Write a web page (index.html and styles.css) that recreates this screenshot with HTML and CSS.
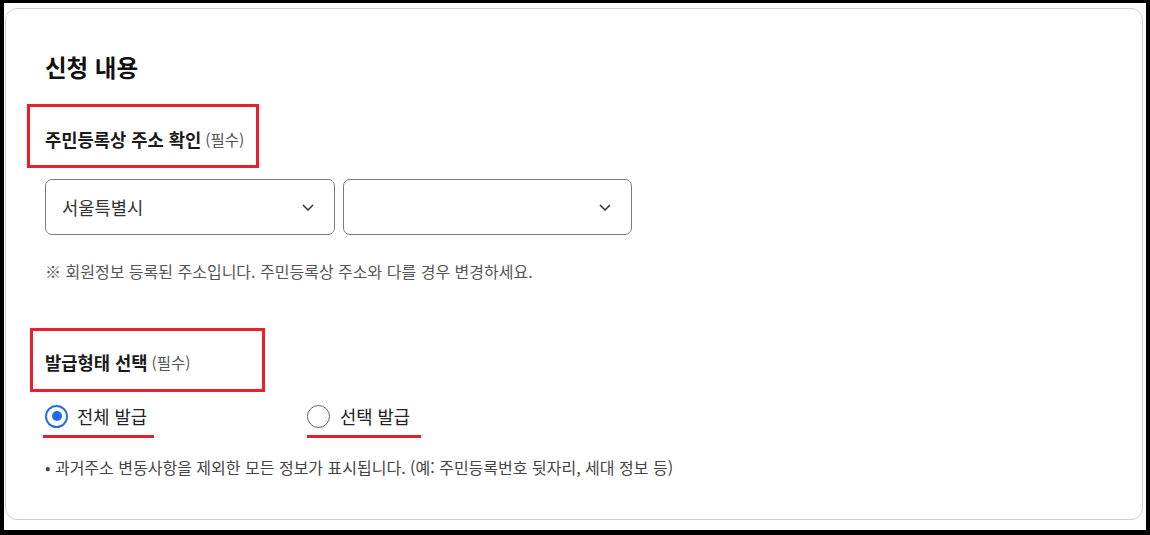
FILE: index.html
```html
<!DOCTYPE html>
<html lang="ko">
<head>
<meta charset="utf-8">
<link rel="stylesheet" href="styles.css">
</head>
<body>
<div class="frame">
  <section class="card">
    <h2 class="title">신청 내용</h2>

    <div class="label-box box-addr">
      <span class="label">주민등록상 주소 확인</span> <span class="req">(필수)</span>
    </div>

    <div class="selects">
      <div class="select">
        <span class="select-text">서울특별시</span>
        <svg class="chev" width="12" height="7" viewBox="0 0 12 7"><path d="M1 1 L6 6 L11 1" fill="none" stroke="#333" stroke-width="1.5"/></svg>
      </div>
      <div class="select second">
        <span class="select-text"></span>
        <svg class="chev" width="12" height="7" viewBox="0 0 12 7"><path d="M1 1 L6 6 L11 1" fill="none" stroke="#333" stroke-width="1.5"/></svg>
      </div>
    </div>

    <p class="note note-addr">※ 회원정보 등록된 주소입니다. 주민등록상 주소와 다를 경우 변경하세요.</p>

    <div class="label-box box-type">
      <span class="label">발급형태 선택</span> <span class="req">(필수)</span>
    </div>

    <div class="radios">
      <div class="radio first checked">
        <span class="circle"><span class="dot"></span></span>
        <span class="radio-text">전체 발급</span>
      </div>
      <div class="radio second">
        <span class="circle"></span>
        <span class="radio-text">선택 발급</span>
      </div>
    </div>

    <p class="note note-type">• 과거주소 변동사항을 제외한 모든 정보가 표시됩니다. (예: 주민등록번호 뒷자리, 세대 정보 등)</p>
  </section>
</div>
</body>
</html>
```

FILE: styles.css
```css
html, body {
  margin: 0;
  padding: 0;
  background: #000;
}

body {
  font-family: "Noto Sans CJK KR", "Noto Sans", sans-serif;
  color: #222;
}

.frame {
  margin: 3px 4px 0 4px;
  height: 527px;
  background: #fff;
  padding: 5px 3px 0 1px;
  box-sizing: border-box;
}

.card {
  height: 512px;
  box-sizing: border-box;
  border: 1px solid #cfcfcf;
  border-radius: 12px;
  padding: 42px 0 0 39px;
}

.title {
  margin: 0;
  font-size: 23.5px;
  line-height: 32px;
  font-weight: 700;
  color: #111;
}

.label-box {
  box-sizing: border-box;
  border: 3px solid #e8202a;
  height: 64px;
  margin-left: -18px;
  padding-left: 15px;
  display: flex;
  align-items: center;
  padding-top: 6px;
  white-space: nowrap;
}

.box-addr {
  width: 232px;
  margin-top: 21px;
}

.box-type {
  width: 235px;
  margin-left: -15px;
  padding-left: 12px;
  padding-top: 4px;
  margin-top: 46px;
}

.label {
  font-size: 17.7px;
  font-weight: 700;
  color: #1a1a1a;
  line-height: 24px;
}

.req {
  font-size: 15.5px;
  color: #555;
  line-height: 24px;
  margin-left: 4px;
}

.selects {
  display: flex;
  gap: 8px;
  margin-top: 11px;
}

.select {
  box-sizing: border-box;
  width: 290px;
  height: 56px;
  border: 1px solid #7a7a7a;
  border-radius: 7px;
  display: flex;
  align-items: center;
  justify-content: space-between;
  padding: 0 20px 0 16px;
}

.select.second {
  width: 289px;
}

.select-text {
  font-size: 17.7px;
  color: #333;
}

.chev {
  display: block;
}

.note {
  margin: 0;
  font-size: 16px;
  line-height: 22px;
  color: #555;
}

.note-addr {
  margin-top: 25px;
}

.radios {
  display: flex;
  margin-top: 5px;
}

.radio {
  display: flex;
  align-items: center;
  height: 38px;
  border-bottom: 3px solid #e3202a;
}

.radio.first {
  margin-left: -2px;
  padding: 0 7px 0 2px;
  gap: 9px;
}

.radio.second {
  margin-left: 153px;
  padding: 0 11px 0 0;
  gap: 10px;
}

.circle {
  box-sizing: border-box;
  width: 23px;
  height: 23px;
  border-radius: 50%;
  border: 1.5px solid #666;
  display: flex;
  align-items: center;
  justify-content: center;
}

.radio.checked .circle {
  border: 2px solid #2a6fe0;
}

.dot {
  width: 10px;
  height: 10px;
  border-radius: 50%;
  background: #1f6ae8;
}

.radio-text {
  font-size: 17.7px;
  color: #222;
}

.note-type {
  margin-top: 18px;
  color: #444;
}
```
